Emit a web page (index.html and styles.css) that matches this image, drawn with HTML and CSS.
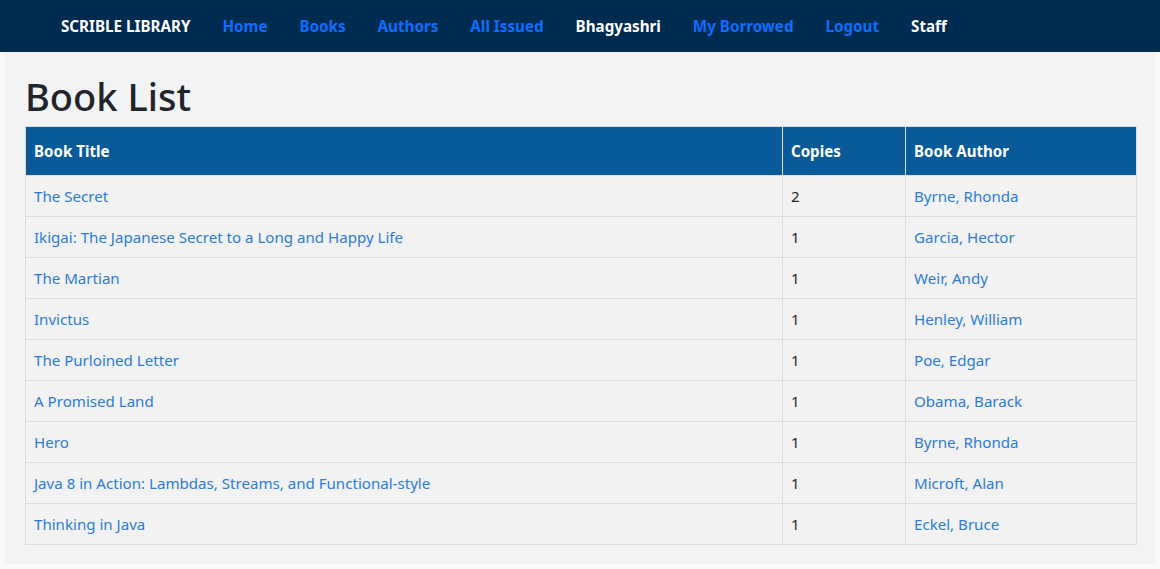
FILE: index.html
```html
<!DOCTYPE html>
<html lang="en">
<head>
<meta charset="utf-8">
<title>Book List</title>
<link rel="stylesheet" href="styles.css">
</head>
<body>
<nav class="navbar">
  <span class="brand">SCRIBLE LIBRARY</span>
  <a class="nav-link" href="#">Home</a>
  <a class="nav-link" href="#">Books</a>
  <a class="nav-link" href="#">Authors</a>
  <a class="nav-link" href="#">All Issued</a>
  <span class="nav-text">Bhagyashri</span>
  <a class="nav-link" href="#">My Borrowed</a>
  <a class="nav-link" href="#">Logout</a>
  <span class="nav-text">Staff</span>
</nav>
<main class="content">
  <h1 class="title">Book List</h1>
  <table class="books">
    <colgroup>
      <col class="c-title"><col class="c-copies"><col class="c-author">
    </colgroup>
    <thead>
      <tr><th>Book Title</th><th>Copies</th><th>Book Author</th></tr>
    </thead>
    <tbody>
      <tr><td><a href="#">The Secret</a></td><td>2</td><td><a href="#">Byrne, Rhonda</a></td></tr>
      <tr><td><a href="#">Ikigai: The Japanese Secret to a Long and Happy Life</a></td><td>1</td><td><a href="#">Garcia, Hector</a></td></tr>
      <tr><td><a href="#">The Martian</a></td><td>1</td><td><a href="#">Weir, Andy</a></td></tr>
      <tr><td><a href="#">Invictus</a></td><td>1</td><td><a href="#">Henley, William</a></td></tr>
      <tr><td><a href="#">The Purloined Letter</a></td><td>1</td><td><a href="#">Poe, Edgar</a></td></tr>
      <tr><td><a href="#">A Promised Land</a></td><td>1</td><td><a href="#">Obama, Barack</a></td></tr>
      <tr><td><a href="#">Hero</a></td><td>1</td><td><a href="#">Byrne, Rhonda</a></td></tr>
      <tr><td><a href="#">Java 8 in Action: Lambdas, Streams, and Functional-style</a></td><td>1</td><td><a href="#">Microft, Alan</a></td></tr>
      <tr><td><a href="#">Thinking in Java</a></td><td>1</td><td><a href="#">Eckel, Bruce</a></td></tr>
    </tbody>
  </table>
</main>
</body>
</html>
```

FILE: styles.css
```css
* { box-sizing: border-box; }
html, body { margin: 0; padding: 0; }
body {
  background: #f8f9fa;
  font-family: "Noto Sans", "Open Sans", sans-serif;
  font-size: 15.1px;
  line-height: 24px;
  color: #212529;
}
.navbar {
  display: flex;
  align-items: center;
  height: 52px;
  padding: 0 0 0 61px;
  background: #002b51;
  font-size: 15.2px;
}
.brand {
  color: #fff;
  font-weight: 700;
  margin-right: 16px;
}
.nav-link, .nav-text {
  padding: 0 16px;
  font-weight: 700;
  text-decoration: none;
}
.nav-link { color: #0d6efd; }
.nav-text { color: #fff; }
.content {
  margin: 0 5px 5px;
  padding: 20px 18px 19px 20px;
  background: #f2f3f5;
}
.title {
  margin: 0 0 6px;
  font-size: 38px;
  font-weight: 500;
  line-height: 48px;
}
.books {
  width: 100%;
  border-collapse: collapse;
  table-layout: fixed;
  border: 1px solid #dcdcdc;
}
.c-title { width: 757px; }
.c-copies { width: 123px; }
.books th {
  background: #085a99;
  color: #fff;
  text-align: left;
  font-weight: 700;
  padding: 12px 8px;
  border-left: 1px solid #dcdcdc;
}
.books td {
  background: #f2f2f2;
  padding: 8px;
  border: 1px solid #dcdcdc;
}
.books a {
  color: #2b7cd9;
  text-decoration: none;
}
```
